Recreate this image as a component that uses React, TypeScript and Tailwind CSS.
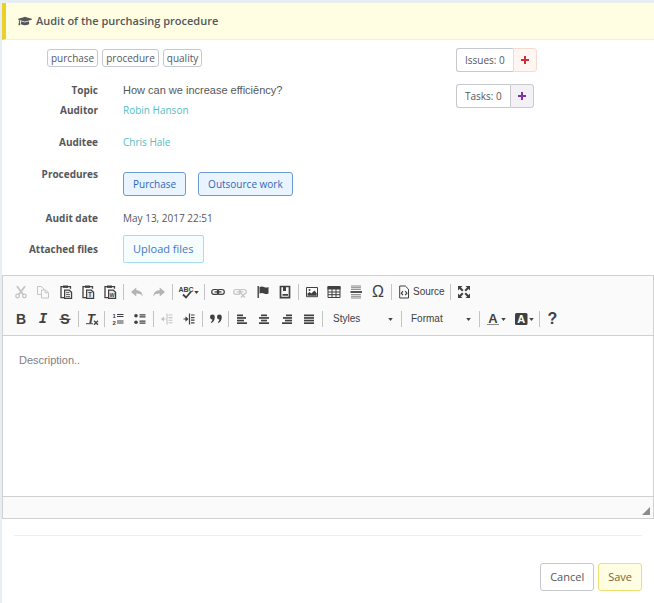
import React from "react";
import { FaGraduationCap } from "react-icons/fa";

type IconProps = { children: React.ReactNode; className?: string };

function Icon({ children, className = "size-4 shrink-0 overflow-visible" }: IconProps) {
  return (
    <svg viewBox="0 0 16 16" className={className} fill="currentColor" stroke="none" aria-hidden="true">
      {children}
    </svg>
  );
}

function Tool({ label, disabled, children }: { label: string; disabled?: boolean; children: React.ReactNode }) {
  return (
    <button
      type="button"
      aria-label={label}
      disabled={disabled}
      className="flex h-6 flex-1 items-center justify-center text-[#404040] disabled:text-[#c4c4c4]"
    >
      {children}
    </button>
  );
}

function Sep() {
  return <div className="mx-0.5 h-4 w-px shrink-0 bg-[#c4c4c4]" />;
}

function Caret() {
  return (
    <svg viewBox="0 0 6 4" className="h-[3px] w-[5px] shrink-0" fill="currentColor" aria-hidden="true">
      <path d="M0 0h6L3 4z" />
    </svg>
  );
}

// clipboard shared by the three paste buttons
function Paste({ children }: { children: React.ReactNode }) {
  return (
    <Icon>
      <path d="M5 1.5h5v2.4H5z" />
      <path d="M5 2.7H3v11h3M10 2.7h2.5v2" fill="none" stroke="currentColor" strokeWidth="1.3" />
      <path d="M6.6 6.2h4.7l2.3 2v6.2h-7z" fill="#e9e9e9" stroke="currentColor" strokeWidth="1.2" />
      {children}
    </Icon>
  );
}

function Lines({ widths, align }: { widths: number[]; align: "left" | "center" | "right" }) {
  return (
    <Icon>
      {widths.map((w, i) => (
        <rect
          key={i}
          x={align === "left" ? 3 : align === "right" ? 13 - w : 8 - w / 2}
          y={3.5 + i * 2.6}
          width={w}
          height="1.7"
        />
      ))}
    </Icon>
  );
}

function Chain() {
  return (
    <g fill="none" stroke="currentColor" strokeWidth="1.2">
      <rect x="1.7" y="5.5" width="7" height="4.8" rx="2.4" />
      <rect x="7.3" y="5.5" width="7" height="4.8" rx="2.4" />
      <path d="M4.5 7.900h7" />
    </g>
  );
}

function Toolbar() {
  return (
    <div className="flex flex-col gap-[3px] overflow-hidden border-b border-[#d1d1d1] bg-[#fafafa] py-1 pl-[7px] font-['Liberation_Sans',sans-serif]">
      <div className="flex items-center">
        <div className="flex w-[111px] shrink-0">
          <Tool label="Cut" disabled>
            <Icon>
              <path d="M4 2.2l6.4 8.6M12 2.2L5.6 10.8" fill="none" stroke="currentColor" strokeWidth="1.8" />
              <circle cx="4.6" cy="12" r="1.8" fill="none" stroke="currentColor" strokeWidth="1.3" />
              <circle cx="11.4" cy="12" r="1.8" fill="none" stroke="currentColor" strokeWidth="1.3" />
            </Icon>
          </Tool>
          <Tool label="Copy" disabled>
            <Icon>
              <path
                d="M6 10.5H2.500v-8h3.600l2.700 2.300V6M6.500 6h3.900l3.100 2.600v5.400h-7zM10 6.200v2.600h3.300"
                fill="none"
                stroke="currentColor"
              />
            </Icon>
          </Tool>
          <Tool label="Paste">
            <Paste>
              <path d="M8 8.2h3.4v.9H8zM8 10.2h4v.9H8zM8 12.2h4v.9H8z" />
            </Paste>
          </Tool>
          <Tool label="Paste as plain text">
            <Paste>
              <text x="10.1" y="13" textAnchor="middle" fontSize="6.5" fontWeight="bold">T</text>
            </Paste>
          </Tool>
          <Tool label="Paste from Word">
            <Paste>
              <text x="10.1" y="13" textAnchor="middle" fontSize="5.5" fontWeight="bold">W</text>
            </Paste>
          </Tool>
        </div>
        <Sep />
        <div className="flex w-11 shrink-0">
          <Tool label="Undo" disabled>
            <Icon>
              <path d="M2 8l5.3-4.500V6.300c4 0 6 2.400 6.500 6.200-1.500-2.300-3.500-2.900-6.500-2.900v2.900z" fill="#b4b4b4" />
            </Icon>
          </Tool>
          <Tool label="Redo" disabled>
            <Icon>
              <path d="M14 8L8.700 3.500V6.300c-4 0-6 2.400-6.500 6.200 1.500-2.300 3.500-2.900 6.500-2.900v2.900z" fill="#b4b4b4" />
            </Icon>
          </Tool>
        </div>
        <Sep />
        <div className="flex w-[27px] shrink-0">
          <Tool label="Spell check">
            <Icon>
              <text x="8" y="7.5" textAnchor="middle" fontSize="7" fontWeight="bold">ABC</text>
              <path d="M5 10.5l3 3L13.500 7" fill="none" stroke="#fafafa" strokeWidth="3" />
              <path d="M5 10.5l3 3L13.500 7" fill="none" stroke="currentColor" strokeWidth="1.8" />
            </Icon>
            <Caret />
          </Tool>
        </div>
        <Sep />
        <div className="flex w-[89px] shrink-0">
          <Tool label="Link">
            <Icon><Chain /></Icon>
          </Tool>
          <Tool label="Unlink" disabled>
            <Icon>
              <Chain />
              <path d="M9 9.5l4 4M13 9.5l-4 4" stroke="#fafafa" strokeWidth="3" />
              <path d="M9 9.5l4 4M13 9.5l-4 4" stroke="currentColor" strokeWidth="1.3" />
            </Icon>
          </Tool>
          <Tool label="Anchor">
            <Icon>
              <path d="M2.5 2h1.400v12H2.500zM4.500 3c2-1 3.300-.6 4.600 0s2.600.8 4.400 0v6.500c-1.800.8-3.100.6-4.400 0s-2.600-1-4.600 0z" />
            </Icon>
          </Tool>
          <Tool label="Templates">
            <Icon>
              <path d="M3.5 2.5h9v11.200h-9z" fill="none" stroke="currentColor" strokeWidth="1.7" />
              <path d="M6 2h3v5H6zM5.500 10h5.500v1.800H5.500z" />
            </Icon>
          </Tool>
        </div>
        <Sep />
        <div className="flex w-[88px] shrink-0">
          <Tool label="Image">
            <Icon>
              <path d="M2.5 3.5h11v9.200h-11z" fill="none" stroke="currentColor" />
              <path d="M3.5 11.800V9.500L5.600 8l1.700 1.400L10.500 6.500l2.200 2.700v2.600z" />
              <circle cx="5.5" cy="5.9" r="1" />
            </Icon>
          </Tool>
          <Tool label="Table">
            <Icon>
              <path d="M1.5 2h13v3.500h-13z" />
              <path d="M2 3h12v10.500H2zM2 8h12M2 10.700h12M6 5v8.500M10 5v8.500" fill="none" stroke="currentColor" />
            </Icon>
          </Tool>
          <Tool label="Horizontal line">
            <Icon>
              <path
                d="M3 2h10M3 3.700h10M3 5.400h10M3 10.600h10M3 12.300h10M3 14h10"
                fill="none"
                stroke="currentColor"
                strokeOpacity=".6"
              />
              <path d="M2.5 7.100h11.500v1.800H2.500z" />
            </Icon>
          </Tool>
          <Tool label="Special character">
            <span className="text-base leading-4">Ω</span>
          </Tool>
        </div>
        <Sep />
        <div className="flex w-[54px] shrink-0">
          <button type="button" className="flex h-6 items-center gap-px pl-0.5 text-[10px] text-[#404040]">
            <Icon>
              <path d="M3.7 2h5.600l3.200 3.200V14H3.700z" fill="none" stroke="currentColor" />
              <path d="M7 7.200L5.300 9.200 7 11.200M9.200 7.200l1.700 2-1.700 2" fill="none" stroke="currentColor" strokeWidth="1.2" />
            </Icon>
            Source
          </button>
        </div>
        <Sep />
        <div className="flex w-[21px] shrink-0">
          <Tool label="Maximize">
            <Icon>
              <path d="M2 2h4.500L2 6.500zM14 2v4.500L9.500 2zM2 14V9.500L6.500 14zM14 14H9.500L14 9.500z" />
              <path d="M3 3l3.800 3.800M13 3L9.200 6.800M3 13l3.800-3.800M13 13L9.200 9.200" stroke="currentColor" strokeWidth="2" />
            </Icon>
          </Tool>
        </div>
      </div>

      <div className="flex items-center">
        <div className="flex w-[66px] shrink-0">
          <Tool label="Bold"><span className="text-sm leading-4 font-bold">B</span></Tool>
          <Tool label="Italic">
            <span className="font-['Liberation_Mono',monospace] text-sm leading-6 font-bold italic">I</span>
          </Tool>
          <Tool label="Strikethrough">
            <Icon>
              <text x="8" y="13" textAnchor="middle" fontSize="14" fontWeight="bold">S</text>
              <path d="M2.5 8.300h11" stroke="currentColor" strokeWidth="1.2" />
            </Icon>
          </Tool>
        </div>
        <Sep />
        <div className="flex w-[21px] shrink-0">
          <Tool label="Remove format">
            <Icon>
              <text x="7" y="12" textAnchor="middle" fontSize="13" fontWeight="bold" fontStyle="italic">T</text>
              <path d="M2 12.700h7" stroke="currentColor" />
              <path d="M10 9.800l4 4M14 9.800l-4 4" stroke="currentColor" strokeWidth="1.3" />
            </Icon>
          </Tool>
        </div>
        <Sep />
        <div className="flex w-11 shrink-0">
          <Tool label="Numbered list">
            <Icon>
              <text x="2.5" y="7" fontSize="6" fontWeight="bold">1</text>
              <text x="2.5" y="13.5" fontSize="6" fontWeight="bold">2</text>
              <path d="M7 3.500h6.500M7 5.500h6.500M7 10h6.500M7 12h6.500" stroke="currentColor" strokeWidth="1.1" />
            </Icon>
          </Tool>
          <Tool label="Bulleted list">
            <Icon>
              <circle cx="4" cy="4.8" r="1.8" />
              <circle cx="4" cy="11.2" r="1.8" />
              <path d="M7.500 3.800h6M7.500 5.800h6M7.500 10.200h6M7.500 12.200h6" stroke="currentColor" strokeWidth="1.3" />
            </Icon>
          </Tool>
        </div>
        <Sep />
        <div className="flex w-11 shrink-0">
          <Tool label="Decrease indent" disabled>
            <Icon>
              <path d="M2.500 8h4M8 2.500v11M9.500 4h4M9.500 6.600h4M9.500 9.200h4M9.500 11.800h4" stroke="currentColor" strokeWidth="1.1" />
              <path d="M2 8l3-2.500v5z" />
            </Icon>
          </Tool>
          <Tool label="Increase indent">
            <Icon>
              <path d="M2.500 8h4M8.500 2.500v11M10 4h3.500M10 6.600h3.500M10 9.200h3.500M10 11.800h3.500" stroke="currentColor" strokeWidth="1.2" />
              <path d="M7.500 8l-3-2.700v5.400z" />
            </Icon>
          </Tool>
        </div>
        <Sep />
        <div className="flex w-[21px] shrink-0">
          <Tool label="Block quote">
            <Icon>
              <path d="M2 6a2.400 2.400 0 1 1 4.800 0c0 3-1.200 4.800-3.300 6l-.7-.8c1-.8 1.500-1.600 1.600-2.700C3 8.500 2 7.400 2 6zM9 6a2.400 2.400 0 1 1 4.800 0c0 3-1.200 4.800-3.300 6l-.7-.8c1-.8 1.500-1.600 1.600-2.700C10 8.500 9 7.400 9 6z" />
            </Icon>
          </Tool>
        </div>
        <Sep />
        <div className="flex w-[89px] shrink-0">
          <Tool label="Align left"><Lines widths={[6, 9, 7, 10]} align="left" /></Tool>
          <Tool label="Center"><Lines widths={[6, 10, 6, 10]} align="center" /></Tool>
          <Tool label="Align right"><Lines widths={[6, 9, 7, 10]} align="right" /></Tool>
          <Tool label="Justify"><Lines widths={[10, 10, 10, 10]} align="left" /></Tool>
        </div>
        <Sep />
        <button type="button" className="flex h-6 w-[74px] shrink-0 items-center justify-between pr-1.5 pl-2 text-[10px] text-[#404040]">
          Styles
          <Caret />
        </button>
        <Sep />
        <button type="button" className="flex h-6 w-[73px] shrink-0 items-center justify-between pr-1.5 pl-[7px] text-[10px] text-[#404040]">
          Format
          <Caret />
        </button>
        <Sep />
        <div className="flex w-[55px] shrink-0">
          <Tool label="Text color">
            <Icon>
              <text x="8" y="11.5" textAnchor="middle" fontSize="13" fontWeight="bold">A</text>
              <path d="M2 13.500h12" stroke="currentColor" strokeOpacity=".6" />
            </Icon>
            <Caret />
          </Tool>
          <Tool label="Background color">
            <Icon>
              <rect x="2" y="2" width="12.5" height="12" rx="1.5" />
              <text x="8.2" y="12" textAnchor="middle" fontSize="11" fontWeight="bold" fill="#fff">A</text>
            </Icon>
            <Caret />
          </Tool>
        </div>
        <Sep />
        <div className="flex w-[21px] shrink-0">
          <Tool label="About"><span className="text-base leading-4 font-bold">?</span></Tool>
        </div>
      </div>
    </div>
  );
}

function Counter({ label, add, tone }: { label: string; add: string; tone: string }) {
  return (
    <div className="flex h-6 text-[10px]">
      <button type="button" className="rounded-l-[3px] border border-r-0 border-[#c5c8cd] px-2">{label}</button>
      <button type="button" aria-label={add} className={`flex w-6 items-center justify-center rounded-r-[3px] border ${tone}`}>
        <svg viewBox="0 0 8 8" className="size-2" aria-hidden="true">
          <path d="M4 0v8M0 4h8" stroke="currentColor" strokeWidth="2" />
        </svg>
      </button>
    </div>
  );
}

function Row({ label, children }: { label: string; children: React.ReactNode }) {
  return (
    <div className="flex gap-[25px]">
      <dt className="w-24 shrink-0 text-right font-bold">{label}</dt>
      <dd className="flex gap-3">{children}</dd>
    </div>
  );
}

function App() {
  return (
    <div className="bg-[#e8edf1] pt-[3px] pl-0.5 font-['Open_Sans',sans-serif] text-[11px] leading-5 text-[#55575b]">
      <form className="border-b border-[#f3f3f3] bg-white">
        <header className="flex h-[37px] items-center gap-1 border-b border-l-4 border-b-[#eeeeee] border-l-[#ebcf2c] bg-[#fffde2] pl-3">
          <FaGraduationCap className="size-3.5" />
          <h1 className="font-semibold">Audit of the purchasing procedure</h1>
        </header>

        <div className="flex justify-between pb-3">
          <div>
            <ul className="flex gap-1 pt-[9px] pb-[13px] pl-[45px] text-[10px] leading-4">
              <li className="rounded-[3px] border border-[#c5c8cd] px-[3px]">purchase</li>
              <li className="rounded-[3px] border border-[#c5c8cd] px-[3px]">procedure</li>
              <li className="rounded-[3px] border border-[#c5c8cd] px-[3px]">quality</li>
            </ul>
            <dl className="flex flex-col gap-3 text-[10px]">
              <div>
                <Row label="Topic">
                  <span className="font-['Liberation_Sans',sans-serif] text-[11px]">How can we increase efficiēncy?</span>
                </Row>
                <Row label="Auditor">
                  <a href="#robin-hanson" className="text-[#54bdc6]">Robin Hanson</a>
                </Row>
              </div>
              <Row label="Auditee">
                <a href="#chris-hale" className="text-[#54bdc6]">Chris Hale</a>
              </Row>
              <Row label="Procedures">
                <button type="button" className="mt-2 h-6 rounded-[3px] border border-[#6c9bd2] bg-[#eaf4fe] px-[9px] text-[#3166bf]">Purchase</button>
                <button type="button" className="mt-2 h-6 rounded-[3px] border border-[#6c9bd2] bg-[#eaf4fe] px-[9px] text-[#3166bf]">Outsource work</button>
              </Row>
              <Row label="Audit date">May 13, 2017 22:51</Row>
              <div className="-mt-[5px] flex items-center gap-[25px]">
                <dt className="w-24 shrink-0 text-right font-bold">Attached files</dt>
                <dd>
                  <button type="button" className="h-7 rounded-xs border border-[#a3dff0] bg-[#f5fdff] px-[9px] text-[11px] text-[#4577c4]">Upload files</button>
                </dd>
              </div>
            </dl>
          </div>
          <div className="flex w-[198px] flex-col items-start gap-3 pt-2">
            <Counter label="Issues: 0" add="Add issue" tone="border-[#f4ddd0] bg-[#fff5f3] text-[#cf2f36]" />
            <Counter label="Tasks: 0" add="Add task" tone="border-[#c9cace] bg-[#f3f1f6] text-[#7b34a8]" />
          </div>
        </div>

        <div className="border border-[#d1d1d1]">
          <Toolbar />
          <textarea
            aria-label="Description"
            placeholder="Description.."
            className="block h-40 w-full resize-none px-4 py-3.5 font-['Liberation_Sans',sans-serif] text-[11px] leading-5 placeholder:text-[#808080] focus:outline-none"
          />
          <div className="flex h-[22px] items-end justify-end border-t border-[#d1d1d1] bg-[#fafafa] p-[3px]">
            <svg viewBox="0 0 8 8" className="size-2" fill="#8c8c8c" aria-hidden="true">
              <path d="M8 0v8H0z" />
            </svg>
          </div>
        </div>

        <footer className="mx-3 mt-4 flex justify-end gap-1 border-t border-[#eeeeee] pt-[27px] pb-3">
          <button type="button" className="h-7 rounded-[3px] border border-[#c5c8cd] px-[9px]">Cancel</button>
          <button type="submit" className="h-7 rounded-[3px] border border-[#f2dc73] bg-[#fffde2] px-[9px] text-[#7a6136]">Save</button>
        </footer>
      </form>
    </div>
  );
}

export default App;
